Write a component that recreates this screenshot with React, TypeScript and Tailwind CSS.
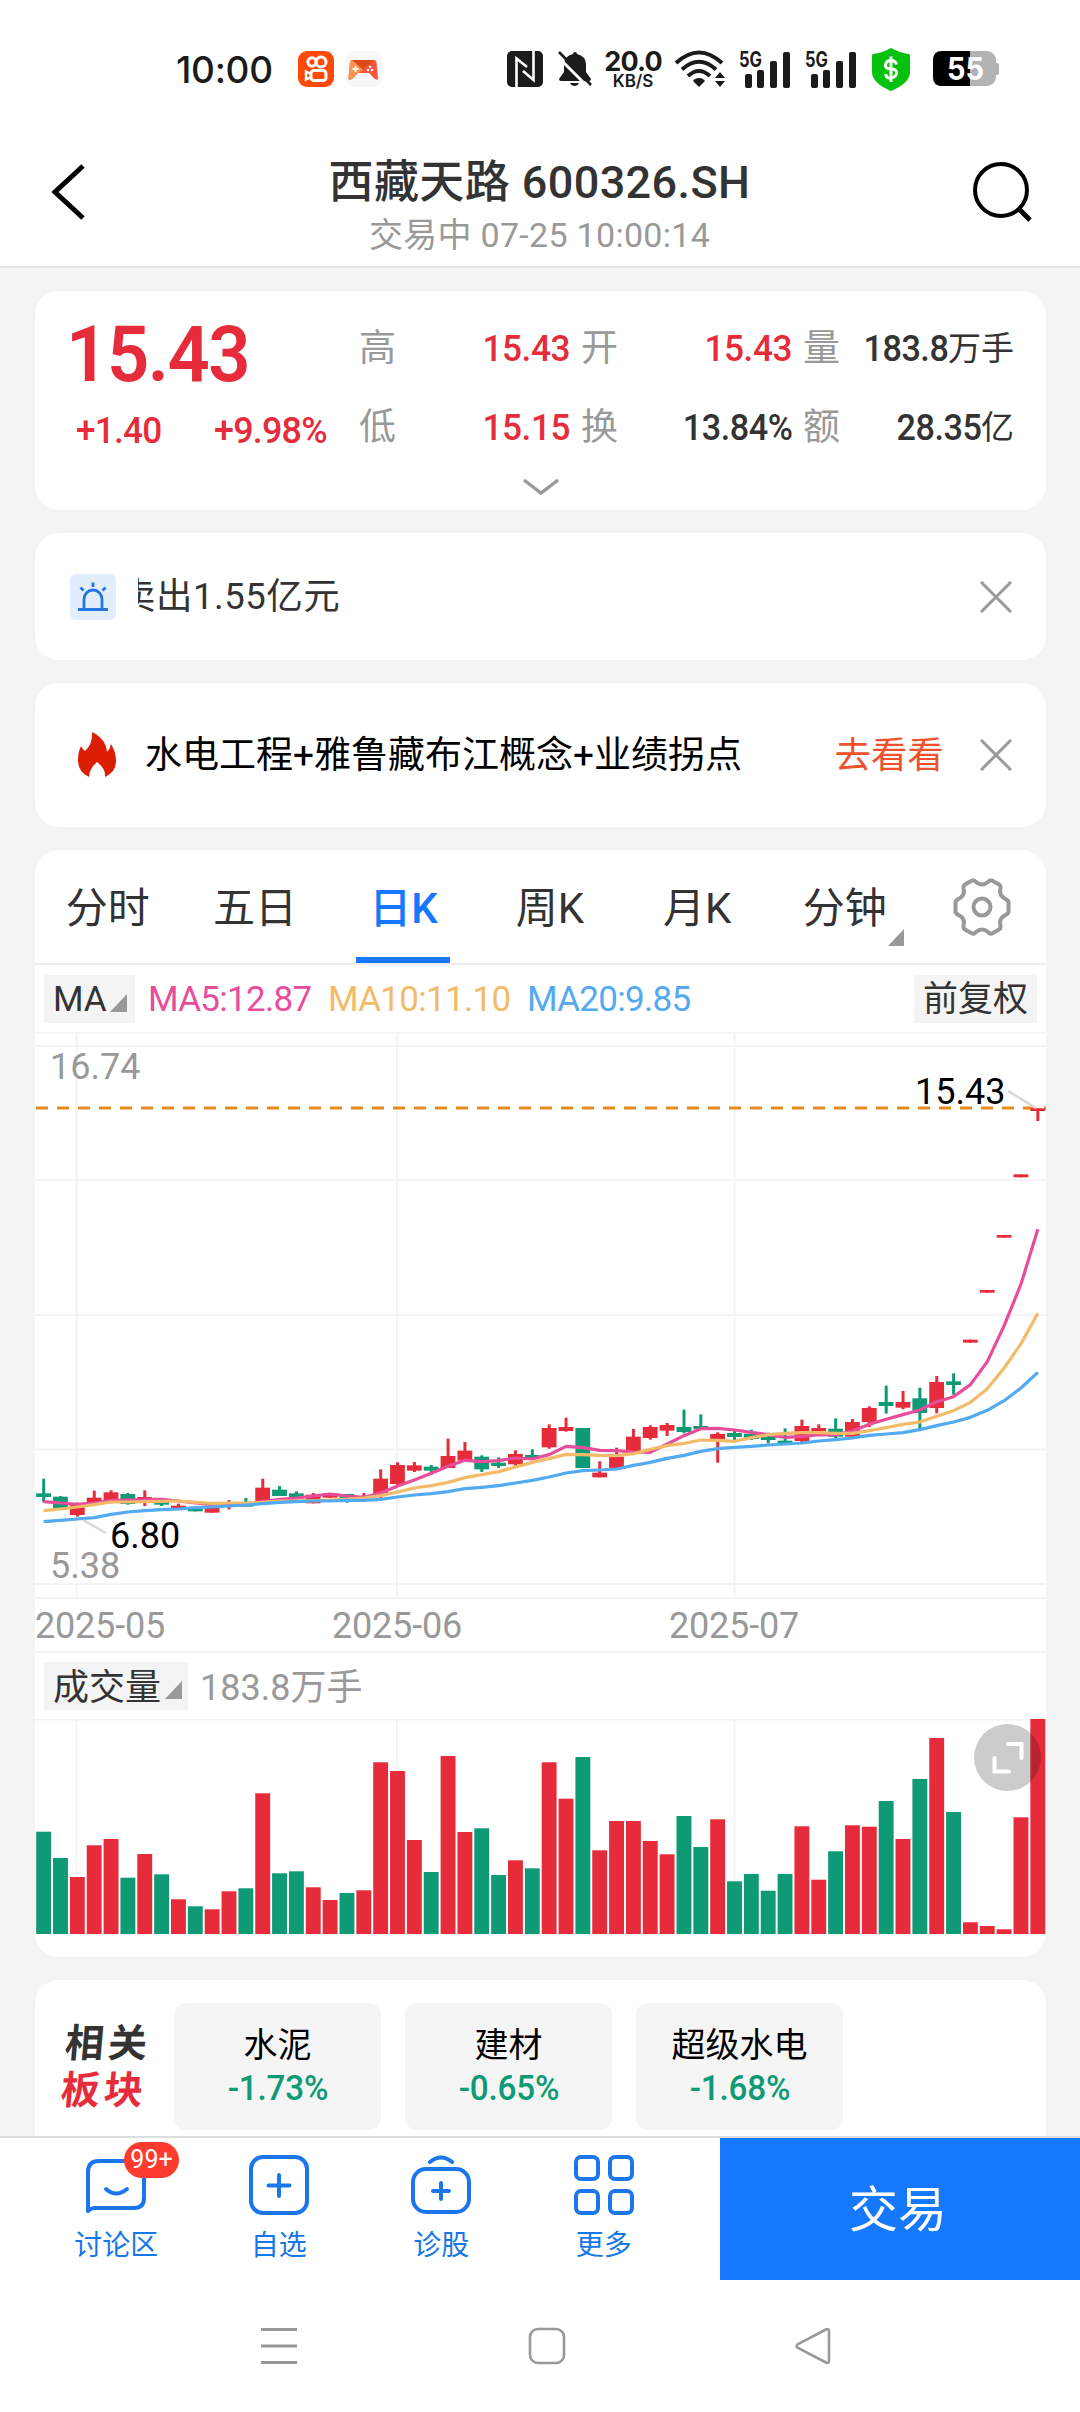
import React from "react";

const UP = "#e62c3b";
const DOWN = "#0e9a75";
const GRID = "#f4f4f4";

interface Candle {
  up: boolean;
  top: number;
  bottom: number;
  high: number;
  low: number;
  volume: number;
}

// [direction, body top, body bottom, high, low, volume]
const RAW: [number, number, number, number, number, number][] = [
  [0, 1300, 1311, 1256, 1327, 102.3],
  [0, 1310, 1344, 1308, 1344, 76],
  [1, 1330, 1365, 1328, 1370, 57],
  [1, 1313, 1328, 1292, 1330, 88.7],
  [1, 1297, 1325, 1291, 1330, 95],
  [0, 1302, 1332, 1299, 1334, 56.3],
  [1, 1311, 1320, 1291, 1338, 80],
  [0, 1323, 1334, 1320, 1338, 59.7],
  [1, 1337, 1344, 1331, 1346, 34.7],
  [0, 1343, 1354, 1343, 1354, 27.7],
  [1, 1340, 1358, 1340, 1358, 24.7],
  [1, 1330, 1340, 1320, 1348, 42.7],
  [0, 1330, 1340, 1314, 1340, 45.7],
  [1, 1283, 1324, 1256, 1324, 140.7],
  [0, 1289, 1308, 1278, 1308, 60.7],
  [0, 1300, 1315, 1294, 1318, 62.7],
  [1, 1304, 1330, 1299, 1330, 46.7],
  [1, 1300, 1313, 1300, 1313, 34],
  [0, 1302, 1318, 1302, 1328, 41],
  [1, 1308, 1315, 1299, 1315, 43.7],
  [1, 1256, 1305, 1228, 1314, 171.7],
  [1, 1215, 1272, 1207, 1278, 163],
  [1, 1216, 1232, 1206, 1236, 94],
  [0, 1220, 1232, 1215, 1244, 62],
  [1, 1188, 1224, 1136, 1224, 178],
  [1, 1172, 1202, 1146, 1202, 102],
  [0, 1190, 1228, 1186, 1236, 105.7],
  [0, 1208, 1218, 1192, 1224, 59],
  [1, 1182, 1213, 1171, 1217, 73.7],
  [0, 1185, 1195, 1168, 1199, 65.7],
  [1, 1104, 1162, 1093, 1166, 171.7],
  [1, 1101, 1113, 1073, 1115, 135.3],
  [0, 1104, 1224, 1104, 1224, 177],
  [1, 1238, 1252, 1204, 1252, 83.7],
  [1, 1190, 1224, 1163, 1224, 113],
  [1, 1130, 1176, 1107, 1176, 113],
  [1, 1101, 1134, 1096, 1139, 93],
  [1, 1095, 1112, 1089, 1128, 79.7],
  [0, 1101, 1116, 1049, 1120, 118],
  [0, 1098, 1107, 1063, 1107, 87],
  [1, 1122, 1139, 1117, 1208, 114.7],
  [0, 1119, 1131, 1112, 1140, 52.7],
  [0, 1121, 1137, 1109, 1140, 60],
  [0, 1130, 1140, 1118, 1150, 43.3],
  [0, 1142, 1152, 1105, 1152, 60],
  [1, 1098, 1143, 1079, 1146, 107.7],
  [1, 1104, 1114, 1093, 1118, 54.3],
  [0, 1106, 1130, 1075, 1134, 82.7],
  [1, 1086, 1130, 1077, 1130, 108.7],
  [1, 1044, 1086, 1039, 1101, 107.3],
  [0, 1026, 1038, 977, 1061, 133],
  [1, 1026, 1043, 993, 1048, 95],
  [0, 1015, 1059, 983, 1106, 155],
  [1, 966, 1044, 948, 1060, 196],
  [0, 964, 975, 940, 1004, 122],
  [1, 839, 848, 839, 848, 11.7],
  [1, 690, 698, 690, 698, 8],
  [1, 525, 533, 525, 533, 4.7],
  [1, 343, 352, 343, 352, 116.7],
  [1, 145, 153, 145, 183, 215],
];

const candles: Candle[] = RAW.map(([up, top, bottom, high, low, volume]) => ({
  up: up === 1,
  top,
  bottom,
  high,
  low,
  volume,
}));

const MA5 = [
  1325, 1329, 1333, 1329, 1321, 1320, 1318, 1318, 1323, 1329, 1334, 1336, 1334,
  1325, 1318, 1314, 1308, 1302, 1308, 1312, 1299, 1278, 1260, 1240, 1219, 1201,
  1205, 1202, 1194, 1197, 1184, 1159, 1163, 1171, 1172, 1176, 1177, 1152, 1127,
  1106, 1105, 1110, 1117, 1124, 1132, 1129, 1124, 1125, 1113, 1093, 1078, 1064,
  1050, 1025, 1010, 974, 905, 797, 672, 508,
];

const MA10 = [
  1352, 1347, 1341, 1334, 1326, 1326, 1325, 1324, 1323, 1327, 1330, 1329, 1329,
  1327, 1323, 1323, 1322, 1320, 1317, 1314, 1307, 1296, 1284, 1277, 1267, 1253,
  1244, 1235, 1221, 1207, 1196, 1183, 1184, 1186, 1187, 1181, 1168, 1157, 1150,
  1140, 1141, 1144, 1133, 1124, 1120, 1118, 1118, 1120, 1120, 1112, 1103, 1093,
  1086, 1069, 1052, 1027, 986, 924, 851, 760,
];

const MA20 = [
  1385, 1381, 1377, 1373, 1363, 1356, 1352, 1349, 1347, 1343, 1341, 1338, 1335,
  1331, 1327, 1325, 1323, 1323, 1321, 1321, 1318, 1311, 1305, 1301, 1295, 1286,
  1282, 1277, 1269, 1261, 1251, 1239, 1232, 1230, 1227, 1216, 1207, 1195, 1186,
  1174, 1166, 1162, 1159, 1155, 1152, 1149, 1143, 1139, 1134, 1126, 1122, 1118,
  1109, 1097, 1086, 1072, 1051, 1022, 984, 937,
];

const STEP = 16.85;
const barX = (i: number) => 1.2 + i * STEP;
const scaleY = (v: number) => 28 + v / 3;
const toPoints = (values: number[]) =>
  values.map((v, i) => `${barX(i) + 7.5},${scaleY(v)}`).join(" ");

const MONTH_LINES = [41.5, 362, 699.5];

const Signal = () => (
  <svg width="52" height="52" viewBox="0 -7 52 52" fill="#1b1b1b">
    <text x="0" y="17" fontSize="21" fontWeight="700" textLength="23" lengthAdjust="spacingAndGlyphs">
      5G
    </text>
    <rect x="6" y="24" width="7" height="14" rx="2" />
    <rect x="18" y="20" width="7" height="18" rx="2" />
    <rect x="31" y="11" width="7" height="27" rx="2" />
    <rect x="44" y="2" width="7" height="36" rx="2" />
  </svg>
);

const StatusBar = () => (
  <div className="flex h-[130px] shrink-0 items-center pl-[176px] pt-[8px] font-['Inter']">
    <span className="w-[122px] text-[37px] font-medium leading-none tracking-[-0.3px] text-[#1b1b1b]">
      10:00
    </span>
    <svg width="36" height="36" viewBox="0 0 36 36" fill="none" stroke="#fff" strokeWidth="3">
      <rect width="36" height="36" rx="9" fill="#ff4906" stroke="none" />
      <circle cx="14" cy="11" r="4.2" />
      <circle cx="23" cy="11" r="5" />
      <rect x="13" y="19.5" width="15" height="10" rx="3" />
      <path d="M13 23l-5-2.500v8l5-2.500" strokeWidth="2.500" />
    </svg>
    <svg className="ml-[12px]" width="36" height="36" viewBox="0 0 36 36">
      <rect width="36" height="36" rx="9" fill="#f7f7f7" />
      <path d="M6 9h22q2 0 2.500 2L32 27q0 3-3 1l-6-6H12l-6 6q-4 2-3.500-1L4 11Q4.500 9 6 9z" fill="#f8553f" />
      <path d="M6 9h22L17 19z" fill="#d84d1c" />
      <path d="M6 9l11 10-5 3-6 6q-4 2-3.500-1L4 11z" fill="#fb9450" />
      <path d="M9.500 15v6M6.500 18h6" stroke="#fff" strokeWidth="1.800" />
      <circle cx="22" cy="19" r="1.200" fill="#fff" />
      <circle cx="26" cy="19" r="1.200" fill="#fff" />
      <circle cx="24" cy="16" r="1.200" fill="#fff" />
    </svg>
    <svg className="ml-[125px]" width="36" height="36" viewBox="0 0 36 36" fill="none">
      <rect width="36" height="36" rx="5" fill="#1b1b1b" />
      <path d="M9.500 36V7.500L20 16M26.500 0v29L16 20" stroke="#fff" strokeWidth="2.600" />
    </svg>
    <svg className="ml-[15px]" width="36" height="36" viewBox="0 0 36 36" fill="#1b1b1b">
      <path d="M17 1q2 0 2 2 9 2 9 11v7l5 7q0 2-2 2H3q-2 0-2-2l5-7v-7Q6 5 15 3q0-2 2-2z" />
      <path d="M12 32h9q-1.500 3-4.500 3T12 32z" />
      <path d="M-1 5l32 32" stroke="#fff" strokeWidth="3" />
      <path d="M1 1l32 33" stroke="#1b1b1b" strokeWidth="2.600" />
    </svg>
    <div className="ml-[8px] flex w-[62px] flex-col items-center font-bold text-[#1b1b1b]">
      <span className="text-[27px] leading-[21px] tracking-[-0.8px]">20.0</span>
      <span className="mt-[2px] text-[17px] font-semibold leading-[14px] tracking-[-0.1px]">KB/S</span>
    </div>
    <svg className="ml-[10px]" width="52" height="38" viewBox="0 0 52 38" fill="none" stroke="#1b1b1b" strokeWidth="4">
      <path d="M2 13Q25-8 48 13M8 19.500Q25 4 42 19.500M14 26q11-10 22 0" />
      <path d="M25 28q4 0 6 3l-6 6-6-6q2-3 6-3z" fill="#1b1b1b" stroke="none" />
      <path d="M46 22l5 6H41zM46 37l5-6H41z" fill="#1b1b1b" stroke="none" />
    </svg>
    <div className="ml-[13px] flex gap-[14px]">
      <Signal />
      <Signal />
    </div>
    <svg className="ml-[15px]" width="38" height="43" viewBox="0 0 38 43">
      <path d="M19 0q9 5 18 6 1 0 1 2v16q0 11-19 19Q0 35 0 24V8q0-2 1-2 9-1 18-6z" fill="#07c10f" />
      <path
        d="M24.500 16.500q-1-4-5.500-4t-5.500 4 5.500 4.500 5.500 4.500-5.500 4.500-5.500-4M19 8.500v25.500"
        fill="none"
        stroke="#fff"
        strokeWidth="3"
      />
    </svg>
    <svg className="ml-[23px]" width="67" height="48" viewBox="0 -6 67 48">
      <rect x="0" y="0" width="63" height="35" rx="9" fill="#b3b3b3" />
      <rect x="61" y="12" width="5" height="12" rx="2" fill="#b3b3b3" />
      <path d="M9 0h28v35H9q-9 0-9-9V9q0-9 9-9z" fill="#000" />
      <text x="14" y="29" fontSize="31" fontWeight="700" fill="#fff" textLength="37" lengthAdjust="spacingAndGlyphs">
        55
      </text>
    </svg>
  </div>
);

const Header = () => (
  <div className="flex h-[138px] shrink-0 items-start justify-between border-b-2 border-[#e2e2e2] pl-[50px] pr-[47px]">
    <svg className="mt-[34px]" width="36" height="56" viewBox="0 0 36 56" fill="none" stroke="#000" strokeWidth="5">
      <path d="M33 2L5 28l28 26" />
    </svg>
    <div className="ml-[20px] flex flex-col items-center whitespace-nowrap">
      <div className="mt-[23px] text-[45px] font-medium leading-[60px] tracking-[0.4px] text-[#333]">
        西藏天路 600326.SH
      </div>
      <div className="mt-[-1px] text-[34px] leading-[46px] tracking-[0.3px] text-[#999]">
        交易中 07-25 10:00:14
      </div>
    </div>
    <svg className="mt-[31px]" width="60" height="64" viewBox="0 0 60 64" fill="none" stroke="#000" strokeWidth="4">
      <circle cx="28" cy="29" r="26" />
      <path d="M46 48l11 11" strokeWidth="5" />
    </svg>
  </div>
);

interface QuoteItemProps {
  label: string;
  value: string;
  unit?: string;
  red?: boolean;
}

const QuoteItem: React.FC<QuoteItemProps> = ({ label, value, unit, red }) => (
  <div className="flex w-[211px] items-center justify-between">
    <span className="text-[37px] text-[#999]">{label}</span>
    <span className="flex items-center">
      <span
        className={
          red
            ? "origin-right scale-x-95 text-[37px] font-medium tracking-[-0.5px] text-[#e62c3b]"
            : "origin-right scale-x-95 text-[36px] font-medium tracking-[-0.5px] text-[#333]"
        }
      >
        {value}
      </span>
      {unit && <span className="text-[33px] text-[#333]">{unit}</span>}
    </span>
  </div>
);

const QuoteCard = () => (
  <div className="flex h-[219px] shrink-0 flex-col rounded-[24px] bg-white">
    <div className="flex h-[176px] pl-[34px]">
      <div className="w-[290px] text-[#e62c3b]">
        <div className="ml-[-3px] mt-[19px] origin-left scale-x-95 text-[78px] font-semibold leading-[90px] tracking-[-1.500px]">
          15.43
        </div>
        <div className="mt-[11px] flex text-[37px] font-medium leading-[40px] tracking-[-0.8px]">
          <span className="ml-[7px] w-[138px] origin-left scale-x-95">+1.40</span>
          <span className="origin-left scale-x-[0.97]">+9.98%</span>
        </div>
      </div>
      <div className="grid grid-cols-[211px_211px_211px] grid-rows-[40px_40px] content-start gap-x-[11px] gap-y-[39px] pt-[38px] leading-[40px]">
        <QuoteItem label="高" value="15.43" red />
        <QuoteItem label="开" value="15.43" red />
        <QuoteItem label="量" value="183.8" unit="万手" />
        <QuoteItem label="低" value="15.15" red />
        <QuoteItem label="换" value="13.84%" />
        <QuoteItem label="额" value="28.35" unit="亿" />
      </div>
    </div>
    <svg className="mt-[10px] self-center" width="38" height="20" viewBox="0 0 38 20" fill="none" stroke="#999" strokeWidth="3.400">
      <path d="M2 3l17 13L36 3" />
    </svg>
  </div>
);

const Close = () => (
  <svg width="32" height="32" viewBox="0 0 32 32" fill="none" stroke="#999" strokeWidth="3">
    <path d="M1 1l30 30M31 1L1 31" />
  </svg>
);

const NoticeCard = () => (
  <div className="flex h-[127px] shrink-0 items-center rounded-[24px] bg-white pl-[35px] pr-[34px]">
    <svg width="46" height="46" viewBox="0 0 46 46" fill="none" stroke="#2475e0" strokeWidth="2.800">
      <rect width="46" height="46" rx="6" fill="#e3eefc" stroke="none" />
      <path d="M8 35.500h30M14 35V25a9 9 0 0 1 18 0v10M23 8.500v4.500M10.500 13.500l3 3M35.500 13.500l-3 3" />
    </svg>
    <div className="ml-[22px] flex-1 overflow-hidden text-[36.500px] leading-[50px] tracking-[0.5px] text-[#333]">
      <span className="ml-[-19px] block">卖出1.55亿元</span>
    </div>
    <Close />
  </div>
);

const TopicCard = () => (
  <div className="flex h-[144px] shrink-0 items-center rounded-[24px] bg-white pl-[42px] pr-[34px]">
    <svg width="40" height="46" viewBox="0 0 40 46">
      <path
        d="M15 0q14 7 15 20 3-3 4-8 5 8 5 17 0 11-11 16 1-8-8-15-8 7-8 15Q1 40 1 28 1 20 4 14q2 4 4 5Q16 12 15 0z"
        fill="#dc1e05"
      />
    </svg>
    <span className="ml-[28px] flex-1 whitespace-nowrap pt-[2px] text-[37px] leading-[50px] text-black">
      水电工程+雅鲁藏布江概念+业绩拐点
    </span>
    <span className="mr-[36px] pt-[2px] text-[36.500px] text-[#f0512d]">去看看</span>
    <Close />
  </div>
);

const TABS = ["分时", "五日", "日K", "周K", "月K", "分钟"];

const ChartTabs = () => (
  <div className="flex h-[115px] items-stretch border-b-2 border-[#ececec]">
    {TABS.map((tab) => (
      <div
        key={tab}
        className={
          tab === "日K"
            ? "relative flex w-[147.400px] justify-center pt-[29px] text-[42px] font-medium leading-[60px] text-[#1677ff]"
            : "relative flex w-[147.400px] justify-center pr-[2px] pt-[29px] text-[42px] leading-[60px] text-[#333]"
        }
      >
        {tab}
        {tab === "日K" && (
          <span className="absolute bottom-0 left-[26px] h-[6px] w-[94px] bg-[#1677ff]" />
        )}
        {tab === "分钟" && (
          <svg className="absolute left-[116px] top-[79px]" width="16" height="17" viewBox="0 0 16 17">
            <path d="M16 0v17H0z" fill="#999" />
          </svg>
        )}
      </div>
    ))}
    <svg
      className="ml-[33px] mt-[27px]"
      width="60"
      height="60"
      viewBox="0 0 60 60"
      fill="none"
      stroke="#999"
      strokeWidth="4"
      strokeLinejoin="round"
    >
      <path d="M20 3.500q2-1 4 1.500 6 5 12 0 2-2.500 4-1.500l7 4q2 1 1.500 4-2 7 5 10.500 3 1.500 3 3.500v9q0 2-3 3.500-7 3.500-5 10.500.5 3-1.500 4l-7 4q-2 1-4-1.500-6-5-12 0-2 2.500-4 1.500l-7-4q-2-1-1.500-4 2-7-5-10.500-3-1.500-3-3.500v-9q0-2 3-3.500 7-3.500 5-10.500-.5-3 1.500-4z" />
      <circle cx="30" cy="30" r="8.500" />
    </svg>
  </div>
);

const Corner = () => (
  <svg className="mt-[8px]" width="17" height="18" viewBox="0 0 17 18">
    <path d="M17 0v18H0z" fill="#999" />
  </svg>
);

const PriceChart = () => (
  <svg className="block shrink-0" width="1011" height="567" viewBox="0 0 1011 567">
    <g stroke={GRID} strokeWidth="2">
      {[0.5, 14, 148, 283, 417.5, 552, 566].map((y) => (
        <path key={y} d={`M0 ${y}H1011`} />
      ))}
      {MONTH_LINES.map((x) => (
        <path key={x} d={`M${x} 0V567`} />
      ))}
    </g>
    <g fontSize="36" fill="#999">
      <text x="15" y="47">16.74</text>
      <text x="15" y="546">5.38</text>
    </g>
    <path d="M1 76H1011" stroke="#e98a1c" strokeWidth="3.200" strokeDasharray="12 9" />
    {candles.map((c, i) => (
      <g key={i} fill={c.up ? UP : DOWN}>
        <rect
          x={barX(i)}
          y={scaleY(c.top)}
          width="14.800"
          height={(c.bottom - c.top) / 3}
        />
        <rect
          x={barX(i) + 6}
          y={scaleY(c.high)}
          width="3"
          height={(c.low - c.high) / 3}
        />
      </g>
    ))}
    <g fill="none" strokeWidth="3.200" strokeLinejoin="round">
      <polyline points={toPoints(MA5)} stroke="#e84d9a" />
      <polyline points={toPoints(MA10)} stroke="#f3bb69" />
      <polyline points={toPoints(MA20)} stroke="#52aaf0" />
    </g>
    <path d="M48 488l23 13M973 59l28 17" stroke="#d6d6d6" strokeWidth="2.500" />
    <g fontSize="36" fill="#000">
      <text x="75" y="516">6.80</text>
      <text x="880" y="72">15.43</text>
    </g>
  </svg>
);

const VolumeChart = () => (
  <div className="relative">
    <svg className="block" width="1011" height="215" viewBox="0 0 1011 215">
      <g stroke={GRID} strokeWidth="2">
        <path d="M0 .5H1011" />
        {MONTH_LINES.map((x) => (
          <path key={x} d={`M${x} 0V215`} />
        ))}
      </g>
      {candles.map((c, i) => (
        <rect
          key={i}
          x={barX(i)}
          y={215 - c.volume}
          width="14.900"
          height={c.volume}
          fill={c.up ? UP : DOWN}
        />
      ))}
    </svg>
    <div className="absolute left-[939px] top-[5px] flex h-[67px] w-[67px] items-center justify-center rounded-full bg-black/20">
      <svg width="32" height="32" viewBox="0 0 32 32" fill="none" stroke="#fff" strokeWidth="4" strokeLinecap="round">
        <path d="M16 2h13.500v14M2.500 16v13.500H17" />
      </svg>
    </div>
  </div>
);

const ChartCard = () => (
  <div className="flex h-[1107px] shrink-0 flex-col rounded-[24px] bg-white">
    <ChartTabs />
    <div className="flex h-[67px] items-center pl-[9px] pr-[9px] text-[35px] leading-[48px]">
      <div className="flex h-[48px] w-[91px] items-center bg-[#f4f4f4] pl-[9px] text-[#333]">
        <span className="mr-[3px] pt-[3px]">MA</span>
        <Corner />
      </div>
      <div className="flex flex-1 pl-[13px] pt-[3px] tracking-[-0.7px]">
        <span className="w-[180px] text-[#e84d9a]">MA5:12.87</span>
        <span className="w-[199px] text-[#f3bb69]">MA10:11.10</span>
        <span className="text-[#52aaf0]">MA20:9.85</span>
      </div>
      <span className="flex h-[48px] w-[123px] justify-center bg-[#f4f4f4] pt-[2px] leading-[46px] text-[#333]">
        前复权
      </span>
    </div>
    <PriceChart />
    <div className="flex h-[54px] items-center border-b-2 border-[#f4f4f4] pt-[2px] text-[36px] leading-[50px] tracking-[-0.2px] text-[#999]">
      <span className="w-[297px]">2025-05</span>
      <span className="w-[337px]">2025-06</span>
      <span>2025-07</span>
    </div>
    <div className="flex h-[66px] items-center pl-[9px] text-[35px] leading-[48px]">
      <div className="flex h-[48px] w-[144px] items-center bg-[#f4f4f4] pl-[9px] text-[#333]">
        <span className="mr-[4px] pt-[4px] text-[36px]">成交量</span>
        <Corner />
      </div>
      <span className="ml-[12px] pt-[4px] text-[36px] text-[#999]">183.8万手</span>
    </div>
    <VolumeChart />
  </div>
);

const SECTORS = [
  { name: "水泥", change: "-1.73%" },
  { name: "建材", change: "-0.65%" },
  { name: "超级水电", change: "-1.68%" },
];

const SectorCard = () => (
  <div className="flex min-h-0 flex-1 items-start rounded-t-[24px] bg-white pl-[28px] pt-[23px]">
    <div className="mr-[27px] mt-[18px] w-[84px] skew-x-[-5deg] whitespace-nowrap text-[39px] font-bold leading-[47px] tracking-[4px] text-[#333]">
      <div>相关</div>
      <div className="text-[#e62c3b]">板块</div>
    </div>
    <div className="flex gap-[24px]">
      {SECTORS.map((s) => (
        <div
          key={s.name}
          className="flex h-[127px] w-[207px] flex-col items-center rounded-[12px] bg-[#f5f5f5] pt-[19px]"
        >
          <span className="text-[34px] leading-[46px] text-black">{s.name}</span>
          <span className="scale-x-95 text-[35px] font-medium leading-[42px] tracking-[-0.2px] text-[#0e9a73]">
            {s.change}
          </span>
        </div>
      ))}
    </div>
  </div>
);

interface ActionProps {
  label: string;
  badge?: string;
  children: React.ReactNode;
}

const Action: React.FC<ActionProps> = ({ label, badge, children }) => (
  <div className="relative flex w-[162.500px] flex-col items-center pt-[16px] text-[28px] leading-[40px] text-[#1677e8]">
    <svg
      width="62"
      height="62"
      viewBox="0 0 62 62"
      fill="none"
      stroke="#1b76ec"
      strokeWidth="4"
      strokeLinejoin="round"
      strokeLinecap="round"
    >
      {children}
    </svg>
    <span className="mt-[10px]">{label}</span>
    {badge && (
      <span className="absolute left-[89px] top-[4px] flex h-[36px] w-[55px] items-center justify-center rounded-full bg-[#ff3b30] text-[25px] text-white">
        {badge}
      </span>
    )}
  </div>
);

const BottomBar = () => (
  <div className="flex h-[144px] shrink-0 border-t-2 border-[#dedede] bg-white">
    <div className="flex w-[720px] pl-[35px]">
      <Action label="讨论区" badge="99+">
        <path d="M3 57V18q0-11 11-11h34q11 0 11 11v26q0 10-10 10H10q-4 0-7 3z" />
        <path d="M21 35q10 9 21 0" />
      </Action>
      <Action label="自选">
        <rect x="3" y="3" width="56" height="56" rx="12" />
        <path d="M31 21v21M20.500 31.500h21" />
      </Action>
      <Action label="诊股">
        <rect x="3" y="15" width="56" height="43" rx="13" />
        <path d="M20 8q11-9 22 0" />
        <path d="M31 29v16M23 37h16" />
      </Action>
      <Action label="更多">
        <rect x="3" y="3" width="22" height="22" rx="5" />
        <rect x="37" y="3" width="22" height="22" rx="5" />
        <rect x="3" y="37" width="22" height="22" rx="5" />
        <rect x="37" y="37" width="22" height="22" rx="5" />
      </Action>
    </div>
    <button className="flex-1 bg-[#1677ff] pr-[4px] pt-[4px] text-[49px] text-white">交易</button>
  </div>
);

const SystemNav = () => (
  <div className="flex h-[132px] shrink-0 items-center bg-white pl-[260px] [&>svg]:fill-none [&>svg]:stroke-[#999]">
    <svg width="38" height="38" viewBox="0 0 38 38" strokeWidth="3">
      <path d="M1 2.500h36M1 19h36M1 35.500h36" />
    </svg>
    <svg className="ml-[230px]" width="38" height="38" viewBox="0 0 38 38" strokeWidth="2.600">
      <rect x="2" y="2" width="34" height="34" rx="8" />
    </svg>
    <svg className="ml-[228px]" width="38" height="38" viewBox="0 0 38 38" strokeWidth="2.600">
      <path d="M32 2.500q3-1.500 3 2v29q0 3.500-3 2L4 21q-3-2 0-4z" />
    </svg>
  </div>
);

export default function App() {
  return (
    <div className="flex h-[2412px] w-[1080px] flex-col overflow-hidden bg-white font-['Roboto','Noto_Sans_CJK_SC',sans-serif]">
      <StatusBar />
      <Header />
      <div className="flex min-h-0 flex-1 flex-col gap-[23px] bg-[#f4f4f4] pl-[35px] pr-[34px] pt-[23px]">
        <QuoteCard />
        <NoticeCard />
        <TopicCard />
        <ChartCard />
        <SectorCard />
      </div>
      <BottomBar />
      <SystemNav />
    </div>
  );
}
